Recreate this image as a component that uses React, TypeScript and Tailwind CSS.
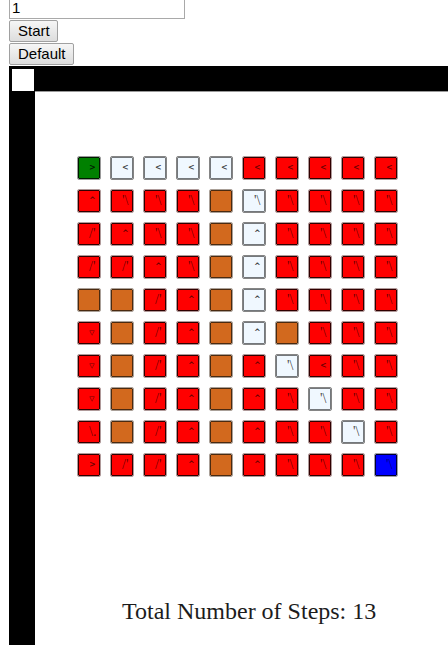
type Kind = "start" | "goal" | "path" | "visited" | "wall";

const KIND_CODES: Record<string, Kind> = {
  s: "start",
  g: "goal",
  p: "path",
  v: "visited",
  w: "wall",
};

const KIND_STYLES: Record<Kind, string> = {
  start: "bg-[#008000] border-[#001800] outline-[#9a9a9a] text-black/80",
  goal: "bg-[#0000ff] border-[#000030] outline-[#a0a0a8] text-black/50",
  path: "bg-[#f0f8ff] border-[#74787c] outline-[#858585] text-black/75",
  visited: "bg-[#ff0000] border-[#300000] outline-[#b09a9a] text-black/60",
  wall: "bg-[#d2691e] border-[#4a2a10] outline-[#aaa098] text-black/50",
};

const KINDS = [
  "sppppvvvvv",
  "vvvvwpvvvv",
  "vvvvwpvvvv",
  "vvvvwpvvvv",
  "wwvvwpvvvv",
  "vwvvwpwvvv",
  "vwvvwvpvvv",
  "vwvvwvvpvv",
  "vwvvwvvvpv",
  "vvvvwvvvvg",
];

// r/l/u/d: straight moves, q: up-left, e: up-right, z: down-right
const MOVES = [
  "rlllllllll",
  "uqqq.qqqqq",
  "euqq.uqqqq",
  "eeuq.uqqqq",
  "..eu.uqqqq",
  "d.eu.u.qqq",
  "d.eu.uqlqq",
  "d.eu.uqqqq",
  "z.eu.uqqqq",
  "reeu.uqqqq",
];

const ARROWS: Record<string, string> = {
  r: ">",
  l: "<",
  u: "^",
  d: "▿",
  q: "'\\",
  e: "/'",
  z: "\\.",
  ".": "",
};

const STRAIGHT = "font-['DejaVu_Sans',sans-serif] text-[8px] font-bold";
const UP = "font-['DejaVu_Sans',sans-serif] text-[8px] font-bold";
const DOWN = "font-['DejaVu_Sans',sans-serif] text-[11px] font-bold";
const DIAGONAL = "font-['Liberation_Serif',serif] text-sm";

const ARROW_STYLES: Record<string, string> = {
  r: STRAIGHT,
  l: STRAIGHT,
  u: UP,
  d: DOWN,
  q: DIAGONAL,
  e: DIAGONAL,
  z: DIAGONAL,
  ".": "",
};

const buttonStyle =
  "h-[22px] rounded-xs border border-[#a0a0a0] bg-linear-to-b from-[#f6f6f6] to-[#dddddd] pr-[7px] pl-2 text-[15px] leading-5";

export default function App() {
  return (
    <main className="overflow-hidden bg-white pl-[9px] font-['Liberation_Sans',Arial,sans-serif] text-black">
      <div className="flex flex-col items-start gap-px">
        <input
          aria-label="Speed"
          defaultValue="1"
          className="h-[19px] w-44 border border-t-0 border-[#a9a9a9] px-0.5 pb-1 text-[15px] leading-4 outline-none"
        />
        <button type="button" className={buttonStyle}>
          Start
        </button>
        <button type="button" className={buttonStyle}>
          Default
        </button>
      </div>
      <section className="mt-px min-h-[579px] bg-black pt-[3px] pl-[3px]">
        <div className="size-[22px] bg-white" />
        <div className="ml-[23px] min-h-[554px] border-t border-[#999] bg-white pt-[65px]">
          <div className="grid w-max grid-cols-[repeat(10,22px)] gap-[11px] pl-[43px]">
            {KINDS.flatMap((row, r) =>
              [...row].map((code, c) => (
                <div
                  key={`${r}-${c}`}
                  className={`size-[22px] rounded-[1px] border pl-2.5 whitespace-nowrap outline-1 ${KIND_STYLES[KIND_CODES[code]]}`}
                >
                  <span className={`block leading-5 ${ARROW_STYLES[MOVES[r][c]]}`}>
                    {ARROWS[MOVES[r][c]]}
                  </span>
                </div>
              )),
            )}
          </div>
          <p className="mt-[119px] pl-[87px] font-['Liberation_Serif',serif] text-2xl leading-8 whitespace-nowrap text-[#1c1c1c]">
            Total Number of Steps: 13
          </p>
        </div>
      </section>
    </main>
  );
}
